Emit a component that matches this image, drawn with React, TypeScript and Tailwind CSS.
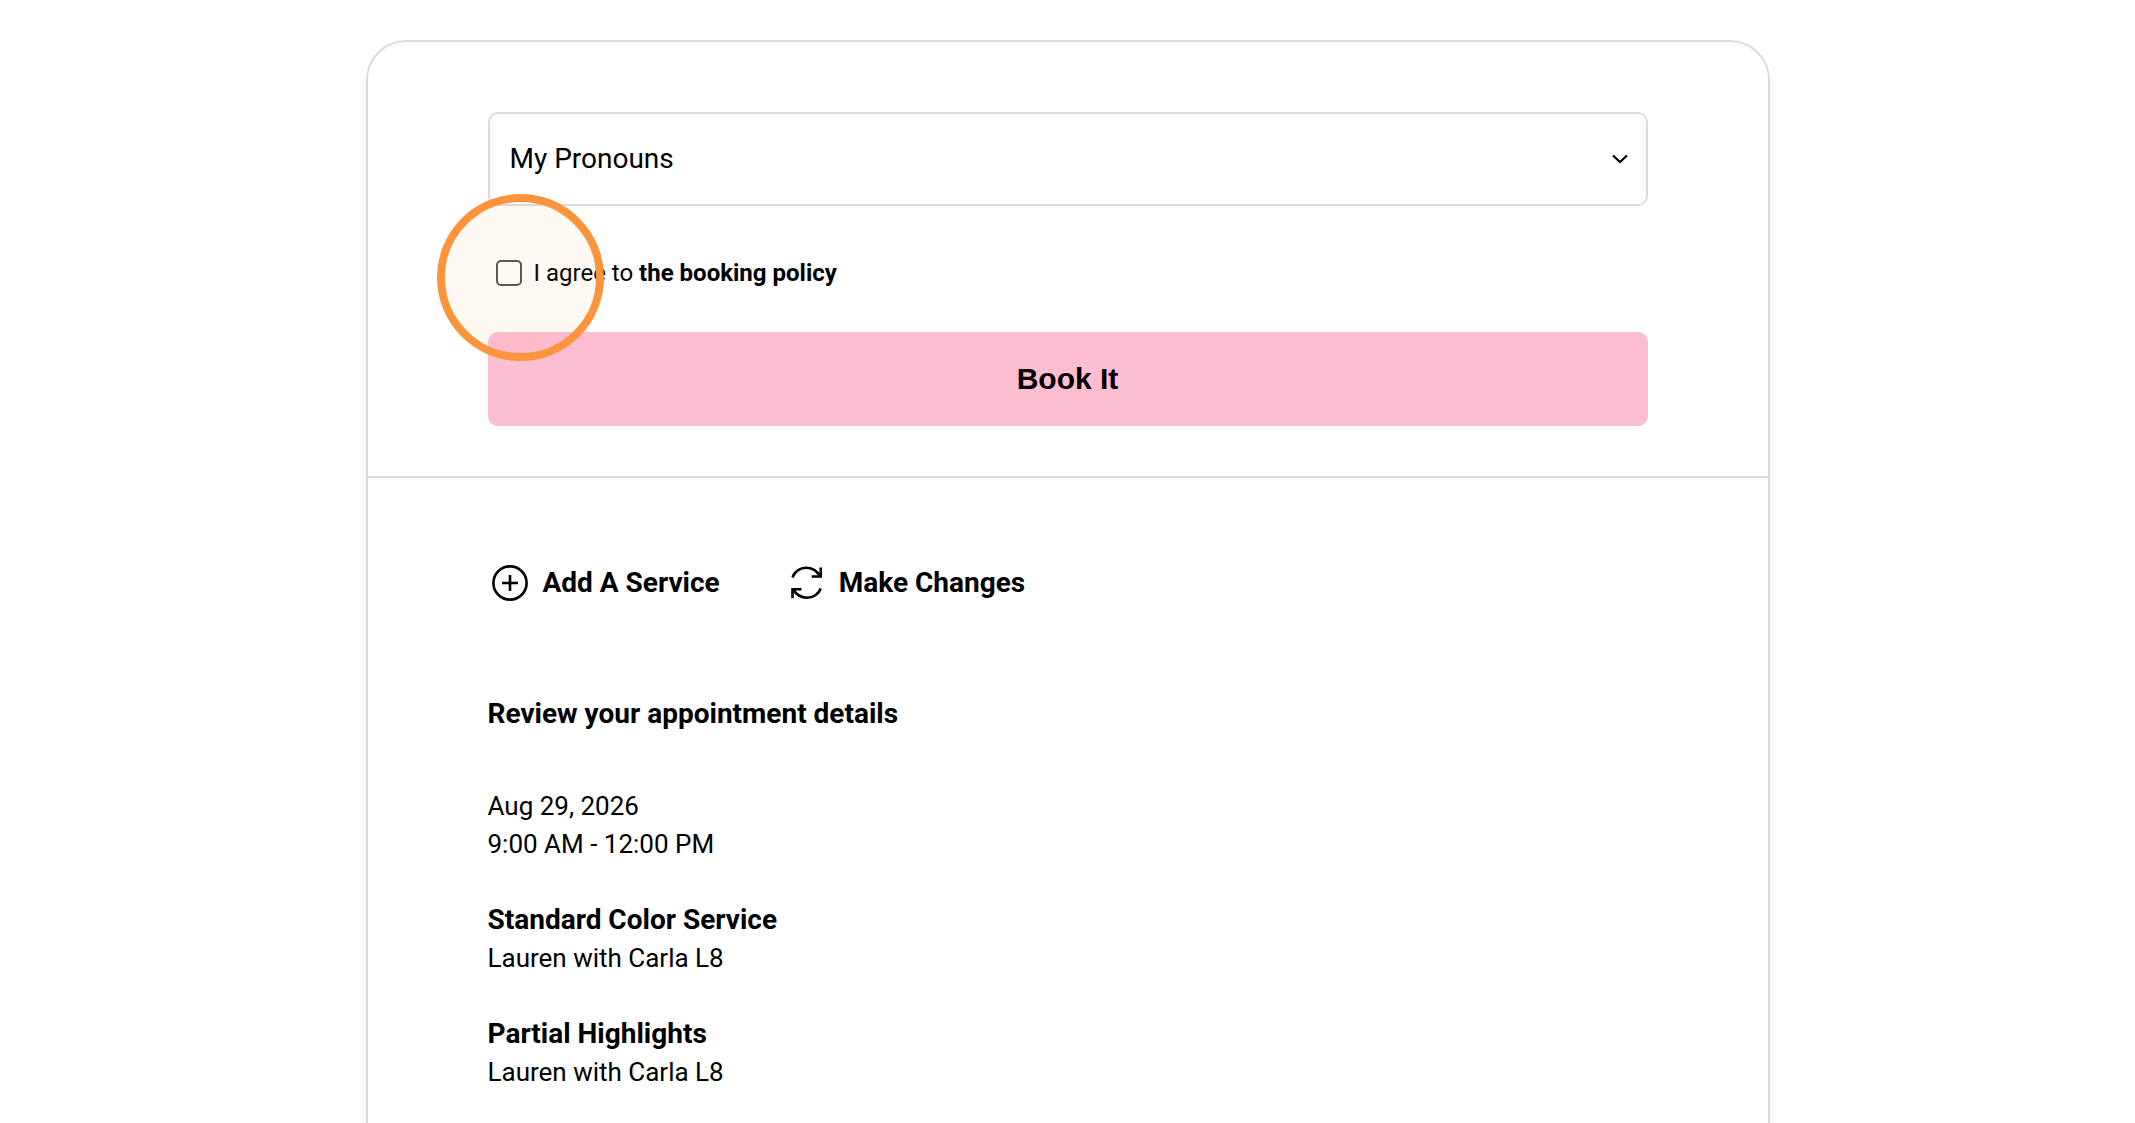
import { useState } from 'react';

const services = [
  { name: 'Standard Color Service', detail: 'Lauren with Carla L8' },
  { name: 'Partial Highlights', detail: 'Lauren with Carla L8' },
];

function PlusCircleIcon() {
  return (
    <svg width="36" height="36" viewBox="0 0 36 36" fill="none" stroke="currentColor" strokeWidth="2.6" aria-hidden="true">
      <circle cx="18" cy="18" r="16.6" />
      <path d="M18 10v16M10 18h16" />
    </svg>
  );
}

function RefreshIcon() {
  return (
    <svg width="36" height="36" viewBox="0 0 36 36" fill="none" stroke="currentColor" strokeWidth="2.6" aria-hidden="true">
      <path d="M4.500 12.500C6.500 6.500 12 2.800 18.200 2.800c6 0 10.800 3.200 13.800 8.400" />
      <path d="M32.700 2.500v9h-9" />
      <path d="M32.700 23.500C30.800 29.300 25 32.700 19 32.700c-6 0-10.800-3.200-13.800-8.200" />
      <path d="M4.500 33.200v-9h9" />
    </svg>
  );
}

export default function App() {
  const [agreed, setAgreed] = useState(false);

  return (
    <main className="h-screen overflow-hidden bg-white px-4 pt-10 font-[Roboto,sans-serif] text-black">
      <div className="mx-auto min-h-screen w-full max-w-[1404px] rounded-t-[40px] border-2 border-[#dcdcdc]">
        <form className="border-b-2 border-[#dcdcdc] px-[120px] pt-[70px] pb-[50px]" onSubmit={(e) => e.preventDefault()}>
          <div className="grid items-center">
            <select
              aria-label="My Pronouns"
              className="col-start-1 row-start-1 h-[94px] w-full appearance-none rounded-[10px] border-2 border-[#dcdcdc] bg-white px-5 text-[28px]"
            >
              <option>My Pronouns</option>
            </select>
            <svg
              className="pointer-events-none col-start-1 row-start-1 mr-5 justify-self-end"
              width="16"
              height="10"
              viewBox="0 0 16 10"
              fill="none"
              stroke="currentColor"
              strokeWidth="2.2"
              aria-hidden="true"
            >
              <path d="M1 1.500l7 6.500 7-6.500" />
            </svg>
          </div>

          <div className="relative flex h-[126px] items-center gap-3 px-2 pt-2">
            <input
              id="policy"
              type="checkbox"
              checked={agreed}
              onChange={(e) => setAgreed(e.target.checked)}
              className="size-[26px] appearance-none rounded-[5px] border-2 border-[#555] bg-white checked:bg-[#555]"
            />
            <label htmlFor="policy" className="text-[24px] leading-8">
              I agree to <b className="font-bold">the booking policy</b>
            </label>
            {/* click highlight */}
            <span
              className="pointer-events-none absolute -top-3 -left-[51px] size-[167px] rounded-full border-8 border-[#fb943c] bg-[#fb923c]/6"
              aria-hidden="true"
            />
          </div>

          <button
            type="submit"
            className="h-[94px] w-full rounded-[10px] bg-[#febed2] pb-[2px] font-['Liberation_Sans',Arial,sans-serif] text-[30px] font-bold"
          >
            Book It
          </button>
        </form>

        <section className="px-[120px] pt-[85px]">
          <div className="flex gap-[68px] px-1">
            <button type="button" className="flex items-center gap-[15px] text-[28px] leading-10 font-bold">
              <PlusCircleIcon />
              Add A Service
            </button>
            <button type="button" className="flex items-center gap-[15px] text-[28px] leading-10 font-bold">
              <RefreshIcon />
              Make Changes
            </button>
          </div>

          <h2 className="mt-[91px] text-[28px] leading-10 font-bold">Review your appointment details</h2>

          <p className="mt-[53px] text-[26px] leading-[38px]">
            Aug 29, 2026
            <br />
            9:00 AM - 12:00 PM
          </p>

          {services.map((service) => (
            <div key={service.name} className="mt-[38px] leading-[38px]">
              <h3 className="text-[28px] font-bold">{service.name}</h3>
              <p className="text-[26px]">{service.detail}</p>
            </div>
          ))}
        </section>
      </div>
    </main>
  );
}
